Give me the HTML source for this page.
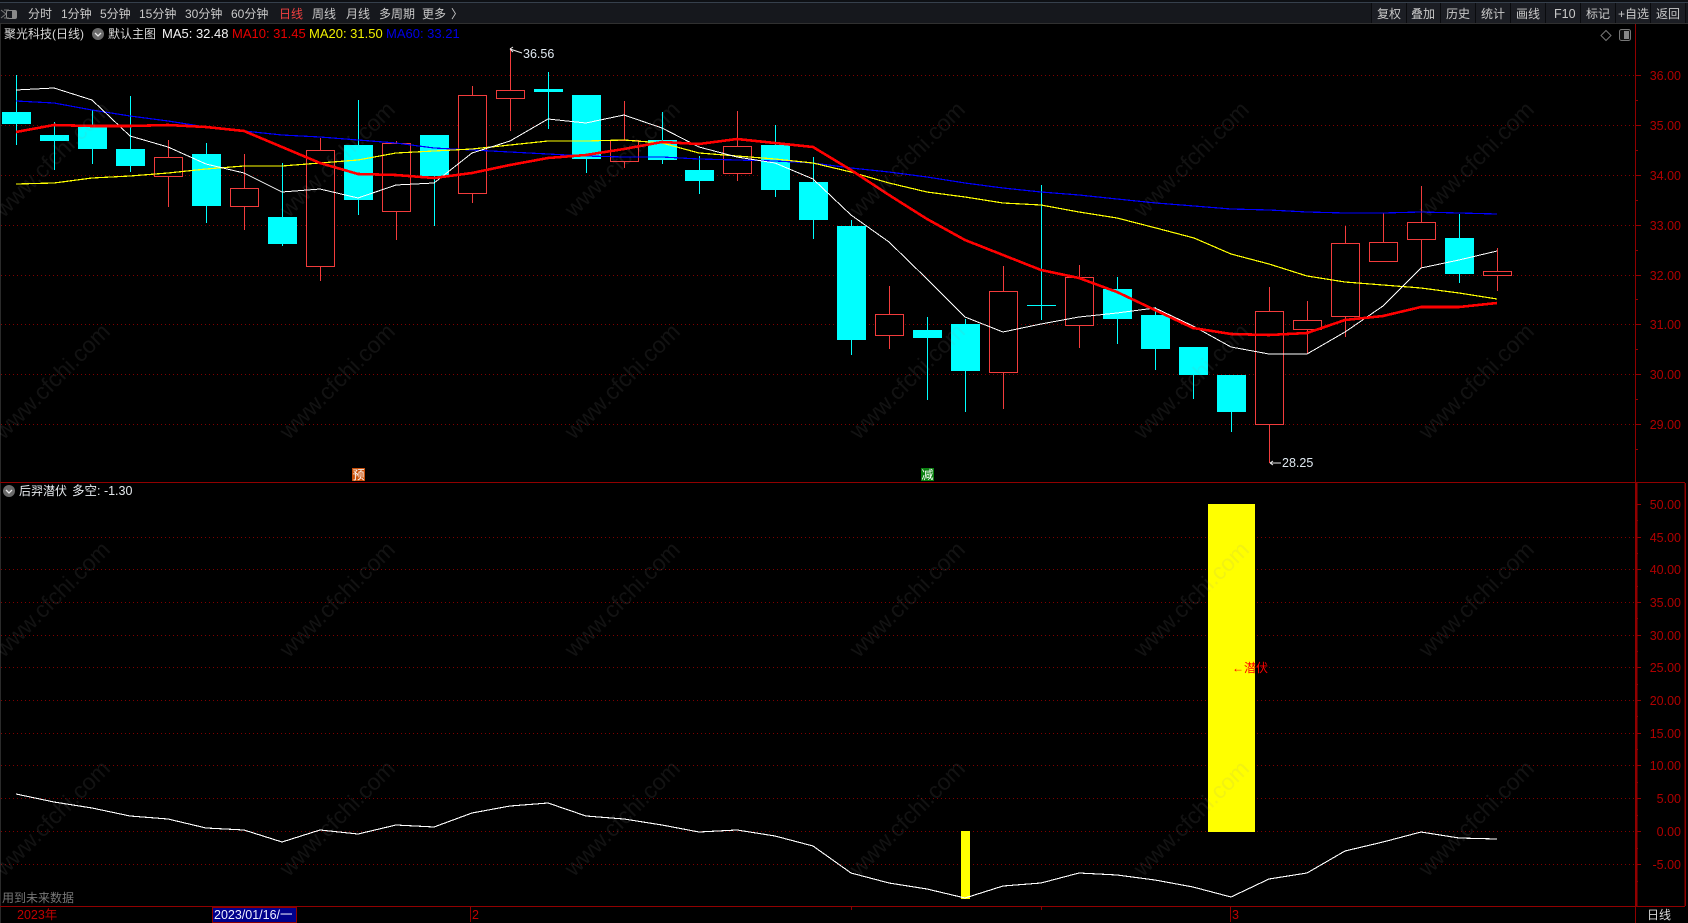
<!DOCTYPE html>
<html lang="zh"><head><meta charset="utf-8"><title>聚光科技</title>
<style>
html,body{margin:0;padding:0;background:#000;overflow:hidden}
svg{display:block}
text{font-family:"Liberation Sans","Noto Sans CJK SC",sans-serif;font-size:12px}
.tb text{fill:#c9c9c9;font-size:12px}
.ax text{fill:#b00000;font-size:12.5px}
.l{font-size:12.5px}
.m{font-size:13px}
.g{stroke:#800000;stroke-width:1;stroke-dasharray:1 3;fill:none}
.wm{font-size:23px;fill:rgba(150,150,150,.12)}
</style></head><body>
<svg width="1688" height="923" viewBox="0 0 1688 923" xmlns="http://www.w3.org/2000/svg">
<rect width="1688" height="923" fill="#000"/>
<rect width="1688" height="23" fill="#16181d"/>
<rect y="0" width="1688" height="2" fill="#0e1014"/>
<rect y="2" width="1688" height="1" fill="#36404c"/>
<rect y="23" width="1688" height="1" fill="#303030"/>
<rect x="0" y="24" width="1" height="899" fill="#2a2a2a"/>

<!-- right buttons -->
<g shape-rendering="crispEdges">
<rect x="1372" y="3" width="314" height="20" fill="#1c1e24"/>
<path d="M1371.5 3V23M1406.5 3V23M1440.5 3V23M1475.5 3V23M1510.5 3V23M1545.5 3V23M1580.5 3V23M1615.5 3V23M1650.5 3V23M1685.5 3V23" stroke="#0a0b0e" fill="none"/>
</g>
<!-- left icon -->
<g fill="none" stroke="#8a8a8a">
<rect x="6.5" y="10.5" width="10" height="8" rx="1.5"/>
<rect x="12" y="11" width="4" height="7" fill="#8a8a8a" stroke="none"/>
<path d="M1 10l5 4-5 4M4 10h5M4 18h5" stroke="#777"/>
</g>
<g class="tb">
<text x="28" y="18">分时</text>
<text x="61" y="18">1分钟</text>
<text x="100" y="18">5分钟</text>
<text x="139" y="18">15分钟</text>
<text x="185" y="18">30分钟</text>
<text x="231" y="18">60分钟</text>
<text x="279" y="18" style="fill:#f04040">日线</text>
<text x="312" y="18">周线</text>
<text x="346" y="18">月线</text>
<text x="379" y="18">多周期</text>
<text x="422" y="18">更多</text>
<text x="451" y="18">〉</text>
<text x="1377" y="18">复权</text>
<text x="1411" y="18">叠加</text>
<text x="1446" y="18">历史</text>
<text x="1481" y="18">统计</text>
<text x="1516" y="18">画线</text>
<text x="1554" y="18" style="font-size:12.5px">F10</text>
<text x="1586" y="18">标记</text>
<text x="1618" y="18">+自选</text>
<text x="1656" y="18">返回</text>
</g>

<!-- grid -->
<g class="g" shape-rendering="crispEdges">
<path d="M1 75.5H1635M1 125.5H1635M1 175.5H1635M1 225.5H1635M1 275.5H1635M1 324.5H1635M1 374.5H1635M1 424.5H1635"/>
<path d="M1 537.5H1635M1 569.5H1635M1 602.5H1635M1 635.5H1635M1 667.5H1635M1 700.5H1635M1 733.5H1635M1 765.5H1635M1 798.5H1635M1 831.5H1635M1 864.5H1635"/>
</g>

<!-- candles -->
<g shape-rendering="crispEdges">
<path stroke="#00ffff" fill="none" d="M16.5 75V145M54.5 122V170M92.5 110V164M130.5 96V172M206.5 143V223M282.5 163V246M358.5 100V215M434.5 135V226M548.5 72V129M586.5 95V173M662.5 112V164M699.5 156V194M775.5 125V197M813.5 157V239M851.5 220V355M927.5 317V400M965.5 319V412M1041.5 185V320M1117.5 277V344M1155.5 307V370M1193.5 347V399M1231.5 375V432M1459.5 214V283M1027 305.5H1056"/>
<path stroke="#f23c3c" fill="none" d="M168.5 140V207M244.5 154V230M320.5 138V281M396.5 141V240M472.5 86V203M510.5 48V131M624.5 101V168M737.5 111V181M889.5 286V349M1003.5 266V409M1079.5 265V348M1269.5 287V463M1307.5 301V354M1345.5 226V337M1383.5 213V242M1421.5 186V268M1497.5 248V291"/>
<g fill="#00ffff">
<rect x="2" y="112" width="29" height="12"/>
<rect x="40" y="135" width="29" height="6"/>
<rect x="78" y="127" width="29" height="22"/>
<rect x="116" y="149" width="29" height="17"/>
<rect x="192" y="154" width="29" height="52"/>
<rect x="268" y="217" width="29" height="27"/>
<rect x="344" y="145" width="29" height="55"/>
<rect x="420" y="135" width="29" height="41"/>
<rect x="534" y="89" width="29" height="3"/>
<rect x="572" y="95" width="29" height="64"/>
<rect x="648" y="140" width="29" height="20"/>
<rect x="685" y="170" width="29" height="11"/>
<rect x="761" y="145" width="29" height="45"/>
<rect x="799" y="182" width="29" height="38"/>
<rect x="837" y="226" width="29" height="114"/>
<rect x="913" y="330" width="29" height="8"/>
<rect x="951" y="324" width="29" height="47"/>
<rect x="1103" y="289" width="29" height="30"/>
<rect x="1141" y="315" width="29" height="34"/>
<rect x="1179" y="347" width="29" height="28"/>
<rect x="1217" y="375" width="29" height="37"/>
<rect x="1445" y="238" width="29" height="36"/>
</g>
<g fill="#000" stroke="#f23c3c">
<rect x="154.5" y="157.5" width="28" height="19"/>
<rect x="230.5" y="188.5" width="28" height="18"/>
<rect x="306.5" y="150.5" width="28" height="116"/>
<rect x="382.5" y="143.5" width="28" height="68"/>
<rect x="458.5" y="95.5" width="28" height="98"/>
<rect x="496.5" y="90.5" width="28" height="8"/>
<rect x="610.5" y="140.5" width="28" height="21"/>
<rect x="723.5" y="146.5" width="28" height="27"/>
<rect x="875.5" y="314.5" width="28" height="21"/>
<rect x="989.5" y="291.5" width="28" height="81"/>
<rect x="1065.5" y="277.5" width="28" height="48"/>
<rect x="1255.5" y="311.5" width="28" height="113"/>
<rect x="1293.5" y="320.5" width="28" height="9"/>
<rect x="1331.5" y="243.5" width="28" height="73"/>
<rect x="1369.5" y="242.5" width="28" height="19"/>
<rect x="1407.5" y="222.5" width="28" height="17"/>
<rect x="1483.5" y="271.5" width="28" height="4"/>
</g>
</g>

<!-- MAs -->
<g fill="none" shape-rendering="crispEdges" stroke-linejoin="round">
<polyline stroke="#0000ff" stroke-width="1.2" points="16,101 54,103 92,110 130,116 168,121 206,127 244,131 282,135 320,137 358,140 396,143 434,148 472,150 510,152 548,154 586,156 624,157 662,157 699,159 737,160 775,161 813,163 851,168 889,172 927,177 965,183 1003,188 1041,192 1079,195 1117,199 1156,203 1194,206 1231,209 1269,210 1307,212 1345,213 1383,213 1421,212 1459,213 1497,214"/>
<polyline stroke="#ffff00" stroke-width="1.2" points="16,184 54,183 92,178 130,176 168,173 206,169 244,166 282,166 320,163 358,160 396,153 434,151 472,149 510,145 548,141 586,141 624,140 662,143 699,153 737,156 775,159 813,163 851,172 889,183 927,192 965,197 1003,203 1041,205 1079,212 1117,218 1156,228 1194,238 1231,254 1269,264 1307,276 1345,282 1383,285 1421,288 1459,293 1497,299"/>
<polyline stroke="#ffffff" stroke-width="1" points="16,90 54,88 92,100 130,136 168,147 206,164 244,173 282,192 320,189 358,198 396,185 434,183 472,153 510,141 548,119 586,123 624,115 662,128 699,147 737,157 775,163 813,179 851,215 889,242 927,279 965,317 1003,332 1041,324 1079,317 1117,313 1155,308 1193,326 1231,347 1269,354 1307,354 1345,332 1383,306 1421,268 1459,260 1497,251"/>
<polyline stroke="#ff0000" stroke-width="2.6" points="16,132 54,125 92,126 130,126 168,125 206,127 244,131 282,147 320,163 358,174 396,175 434,178 472,173 510,165 548,158 586,155 624,149 662,142 699,144 737,139 775,143 813,147 851,170 889,195 927,219 965,240 1003,255 1041,270 1079,278 1117,292 1155,310 1193,328 1231,334 1269,335 1307,333 1345,320 1383,316 1421,307 1459,307 1497,303"/>
</g>

<!-- annotations -->
<g fill="none" stroke="#e8e8e8">
<path d="M510 49l12 4M510 49l3-2M510 49l3 3"/>
<path d="M1270 463h11M1270 463l3-2M1270 463l3 2"/>
</g>
<text class="l" x="523" y="58" fill="#dfe8f0">36.56</text>
<text class="l" x="1282" y="467" fill="#dfe8f0">28.25</text>

<!-- badges -->
<rect x="352" y="468" width="13" height="13" fill="#c8500a"/>
<text x="352.5" y="479" fill="#fff">预</text>
<rect x="921" y="468" width="13" height="13" fill="#0a8010"/>
<text x="921.5" y="479" fill="#fff">减</text>

<!-- title row -->
<text x="4" y="38" fill="#d8d8d8">聚光科技(日线)</text>
<circle cx="98" cy="34" r="6" fill="#6a6a6a"/>
<path d="M95 33l3 3 3-3" stroke="#e8e8e8" stroke-width="1.3" fill="none"/>
<text x="108" y="38" fill="#d8d8d8">默认主图</text>
<text class="m" x="162" y="38" fill="#f4f4f4">MA5: 32.48</text>
<text class="m" x="232" y="38" fill="#e60000">MA10: 31.45</text>
<text class="m" x="309" y="38" fill="#f0f000">MA20: 31.50</text>
<text class="m" x="386" y="38" fill="#0000e6">MA60: 33.21</text>
<path d="M1606 30.5l5 5-5 5-5-5z" fill="none" stroke="#777"/>
<rect x="1619.5" y="29.5" width="11" height="11" rx="2" fill="#111" stroke="#777"/>
<rect x="1624" y="31" width="5" height="8" fill="#888"/>

<!-- sub pane header -->
<circle cx="9" cy="491" r="6" fill="#6a6a6a"/>
<path d="M6 490l3 3 3-3" stroke="#e8e8e8" stroke-width="1.3" fill="none"/>
<text x="19" y="495" fill="#e4e8ec">后羿潜伏</text>
<text class="l" x="72" y="495" fill="#e4e8ec">多空: -1.30</text>

<!-- sub pane -->
<g shape-rendering="crispEdges">
<rect x="1208" y="504" width="47" height="328" fill="#ffff00"/>
<rect x="961" y="831" width="9" height="68" fill="#ffff00"/>
<polyline fill="none" stroke="#ffffff" stroke-width="1.1" points="16,794 54,802 92,808 130,816 168,819 206,828 244,830 282,842 320,830 358,834 396,825 434,827 472,813 510,806 548,803 586,816 624,819 662,825 699,832 737,830 775,836 813,846 851,873 889,883 927,889 965,898 1003,886 1041,883 1079,873 1117,875 1155,880 1193,887 1231,897 1269,879 1307,873 1345,851 1383,842 1421,832 1459,838 1497,839"/>
</g>
<text x="1232" y="672" fill="#ff0000">←潜伏</text>
<text x="2" y="902" fill="#777">用到未来数据</text>

<!-- frame -->
<g fill="none" stroke="#900000" shape-rendering="crispEdges">
<path d="M0 482.5H1685M0 906.5H1685"/>
<path d="M1635.5 24V923"/>
<path d="M1636.5 483V906M1685 483V906" stroke-width="1.5"/>
<path d="M1635 75.5h6M1635 100.5h3M1635 125.5h6M1635 150.5h3M1635 175.5h6M1635 200.5h3M1635 225.5h6M1635 250.5h3M1635 275.5h6M1635 299.5h3M1635 324.5h6M1635 349.5h3M1635 374.5h6M1635 399.5h3M1635 424.5h6M1635 449.5h3"/>
<path d="M1635 504.5h6M1635 520.5h3M1635 537.5h6M1635 553.5h3M1635 569.5h6M1635 586.5h3M1635 602.5h6M1635 618.5h3M1635 635.5h6M1635 651.5h3M1635 667.5h6M1635 684.5h3M1635 700.5h6M1635 716.5h3M1635 733.5h6M1635 749.5h3M1635 765.5h6M1635 782.5h3M1635 798.5h6M1635 815.5h3M1635 831.5h6M1635 848.5h3M1635 864.5h6M1635 881.5h3"/>
<path d="M470.5 907V922M1230.5 907V922M1041.5 907V910M851.5 907V910"/>
</g>

<!-- axis labels -->
<g class="ax" text-anchor="end">
<text x="1681" y="80">36.00</text>
<text x="1681" y="130">35.00</text>
<text x="1681" y="180">34.00</text>
<text x="1681" y="230">33.00</text>
<text x="1681" y="280">32.00</text>
<text x="1681" y="329">31.00</text>
<text x="1681" y="379">30.00</text>
<text x="1681" y="429">29.00</text>
<text x="1681" y="509">50.00</text>
<text x="1681" y="542">45.00</text>
<text x="1681" y="574">40.00</text>
<text x="1681" y="607">35.00</text>
<text x="1681" y="640">30.00</text>
<text x="1681" y="672">25.00</text>
<text x="1681" y="705">20.00</text>
<text x="1681" y="738">15.00</text>
<text x="1681" y="770">10.00</text>
<text x="1681" y="803">5.00</text>
<text x="1681" y="836">0.00</text>
<text x="1681" y="869">-5.00</text>
</g>

<!-- bottom axis -->
<text class="l" x="17" y="919" fill="#c00000">2023年</text>
<rect x="212.5" y="907.5" width="84" height="15" fill="#00008b" stroke="#900000"/>
<text class="l" x="214" y="919" fill="#f0f0ff">2023/01/16/一</text>
<text class="l" x="472" y="919" fill="#c00000">2</text>
<text class="l" x="1232" y="919" fill="#c00000">3</text>
<text x="1647" y="919" fill="#d8d8d8">日线</text>

<!-- watermark -->
<g text-anchor="middle" transform="translate(0 3)">
<text class="wm" transform="translate(52 156) rotate(-45)" y="8">www.cfchi.com</text>
<text class="wm" transform="translate(337 156) rotate(-45)" y="8">www.cfchi.com</text>
<text class="wm" transform="translate(622 156) rotate(-45)" y="8">www.cfchi.com</text>
<text class="wm" transform="translate(907 156) rotate(-45)" y="8">www.cfchi.com</text>
<text class="wm" transform="translate(1191 156) rotate(-45)" y="8">www.cfchi.com</text>
<text class="wm" transform="translate(1476 156) rotate(-45)" y="8">www.cfchi.com</text>
<text class="wm" transform="translate(52 378) rotate(-45)" y="8">www.cfchi.com</text>
<text class="wm" transform="translate(337 378) rotate(-45)" y="8">www.cfchi.com</text>
<text class="wm" transform="translate(622 378) rotate(-45)" y="8">www.cfchi.com</text>
<text class="wm" transform="translate(907 378) rotate(-45)" y="8">www.cfchi.com</text>
<text class="wm" transform="translate(1191 378) rotate(-45)" y="8">www.cfchi.com</text>
<text class="wm" transform="translate(1476 378) rotate(-45)" y="8">www.cfchi.com</text>
<text class="wm" transform="translate(52 596) rotate(-45)" y="8">www.cfchi.com</text>
<text class="wm" transform="translate(337 596) rotate(-45)" y="8">www.cfchi.com</text>
<text class="wm" transform="translate(622 596) rotate(-45)" y="8">www.cfchi.com</text>
<text class="wm" transform="translate(907 596) rotate(-45)" y="8">www.cfchi.com</text>
<text class="wm" transform="translate(1191 596) rotate(-45)" y="8">www.cfchi.com</text>
<text class="wm" transform="translate(1476 596) rotate(-45)" y="8">www.cfchi.com</text>
<text class="wm" transform="translate(52 815) rotate(-45)" y="8">www.cfchi.com</text>
<text class="wm" transform="translate(337 815) rotate(-45)" y="8">www.cfchi.com</text>
<text class="wm" transform="translate(622 815) rotate(-45)" y="8">www.cfchi.com</text>
<text class="wm" transform="translate(907 815) rotate(-45)" y="8">www.cfchi.com</text>
<text class="wm" transform="translate(1191 815) rotate(-45)" y="8">www.cfchi.com</text>
<text class="wm" transform="translate(1476 815) rotate(-45)" y="8">www.cfchi.com</text>
</g>
</svg>
</body></html>
